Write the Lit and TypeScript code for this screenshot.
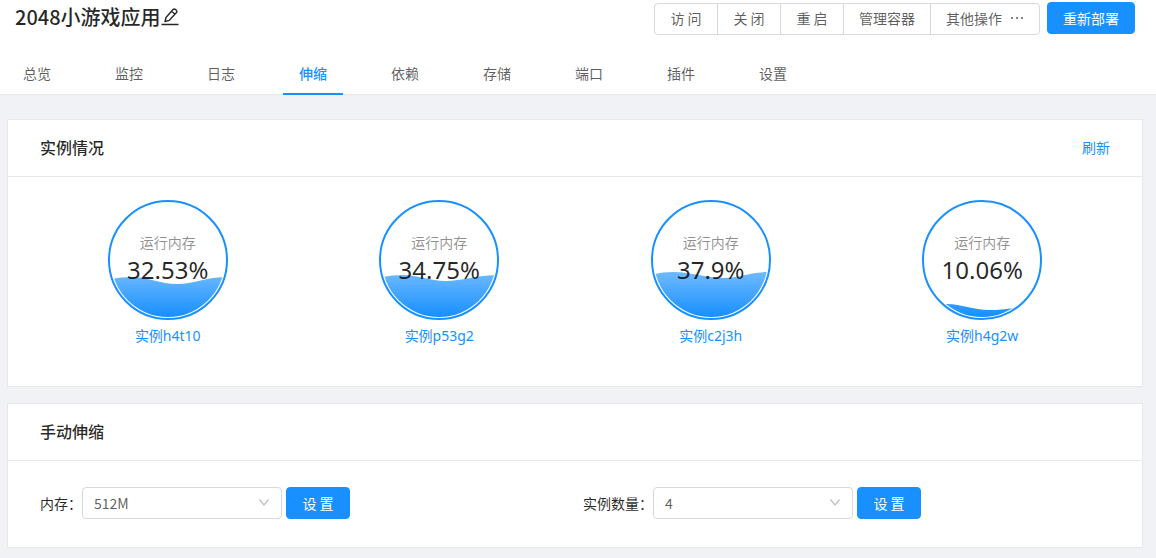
import { LitElement, html, css } from "lit";
import { customElement, property } from "lit/decorators.js";

@customElement("liquid-gauge")
class LiquidGauge extends LitElement {
  @property() caption = "";
  @property() value = "";
  @property() wave = "";

  static styles = css`
    :host {
      display: grid;
      width: 120px;
      height: 120px;
    }
    .dial,
    .text {
      grid-area: 1 / 1;
    }
    .dial {
      display: block;
      width: 120px;
      height: 120px;
    }
    .text {
      z-index: 1;
      display: flex;
      flex-direction: column;
      align-items: center;
      padding-top: 31px;
    }
    .caption {
      font-size: 14px;
      line-height: 22px;
      color: rgba(0, 0, 0, 0.45);
    }
    .value {
      font-family: "Noto Sans", sans-serif;
      font-size: 24px;
      line-height: 34px;
      color: rgba(0, 0, 0, 0.85);
    }
  `;

  render() {
    return html`
      <svg class="dial" viewBox="0 0 120 120" aria-hidden="true">
        <defs>
          <linearGradient id="water" gradientUnits="userSpaceOnUse" x1="0" y1="0" x2="0" y2="116">
            <stop offset="0" stop-color="#ffffff" />
            <stop offset="1" stop-color="#1890ff" />
          </linearGradient>
          <clipPath id="inner"><circle cx="60" cy="60" r="57" /></clipPath>
        </defs>
        <path d=${this.wave} fill="url(#water)" clip-path="url(#inner)" />
        <circle cx="60" cy="60" r="59" fill="none" stroke="#1890ff" stroke-width="2" />
      </svg>
      <div class="text">
        <span class="caption">${this.caption}</span>
        <span class="value">${this.value}</span>
      </div>
    `;
  }
}

const TABS = ["总览", "监控", "日志", "伸缩", "依赖", "存储", "端口", "插件", "设置"];
const ACTIVE_TAB = "伸缩";

const INSTANCES = [
  { name: "实例h4t10", value: "32.53%", wave: "M0 80C8 78 16 77 24 77C40 77 52 84 69 84C86 84 98 77 120 77V120H0Z" },
  { name: "实例p53g2", value: "34.75%", wave: "M0 78C8 76 16 75 24 75C40 75 50 81 67 81C84 81 96 75 120 75V120H0Z" },
  { name: "实例c2j3h", value: "37.9%", wave: "M0 75C8 73 14 72 22 72C42 72 54 78 72 78C90 78 98 72 120 72V120H0Z" },
  { name: "实例h4g2w", value: "10.06%", wave: "M0 104H25C40 104 50 110 68 110C80 110 84 109 120 104V120H0Z" },
];

@customElement("app-root")
class AppRoot extends LitElement {
  static styles = css`
    :host {
      display: block;
      box-sizing: border-box;
      min-height: 100vh;
      padding-bottom: 10px;
      background: #f0f2f5;
      color: rgba(0, 0, 0, 0.85);
      font-family: "Noto Sans CJK SC", sans-serif;
      font-size: 14px;
      line-height: 22px;
    }
    * {
      box-sizing: border-box;
    }
    a {
      color: #1890ff;
      text-decoration: none;
    }
    .header {
      background: #fff;
      border-bottom: 1px solid #e8e8e8;
    }
    .bar {
      display: flex;
      justify-content: space-between;
      align-items: flex-start;
      padding: 2px 21px 0 15px;
    }
    .title {
      display: flex;
      align-items: center;
      margin: 0;
      font-size: 20px;
      line-height: 30px;
      font-weight: 500;
    }
    .edit {
      display: flex;
      padding: 0;
      border: 0;
      background: none;
      color: inherit;
    }
    .actions {
      display: flex;
      align-items: flex-start;
      gap: 7px;
    }
    .group {
      display: flex;
      padding-top: 1px;
    }
    .btn {
      min-width: 64px;
      height: 32px;
      padding: 0 15px;
      border: 1px solid #d9d9d9;
      background: #fff;
      color: rgba(0, 0, 0, 0.65);
      font: inherit;
      line-height: 30px;
      white-space: nowrap;
    }
    .group .btn {
      display: flex;
      align-items: center;
      justify-content: center;
      gap: 8px;
      padding-bottom: 2px;
    }
    .group .btn + .btn {
      margin-left: -1px;
    }
    .group .btn:first-child {
      border-radius: 4px 0 0 4px;
    }
    .group .btn:last-child {
      border-radius: 0 4px 4px 0;
    }
    .primary {
      border-color: #1890ff;
      border-radius: 4px;
      background: #1890ff;
      color: #fff;
    }
    .tabs {
      display: flex;
      gap: 32px;
      padding: 18px 7px 0;
      margin-bottom: -1px;
    }
    .tab {
      padding: 9px 16px;
      border-bottom: 2px solid transparent;
      color: rgba(0, 0, 0, 0.65);
    }
    .tab.active {
      border-color: #1890ff;
      color: #1890ff;
      font-weight: 500;
    }
    .main {
      display: flex;
      flex-direction: column;
      gap: 16px;
      padding: 24px 13px 0 7px;
    }
    .card {
      border: 1px solid #e8e8e8;
      background: #fff;
    }
    .head {
      display: flex;
      justify-content: space-between;
      align-items: center;
      height: 57px;
      padding: 0 32px 2px;
      border-bottom: 1px solid #e8e8e8;
    }
    .heading {
      margin: 0;
      font-size: 16px;
      line-height: 24px;
      font-weight: 500;
    }
    .instances {
      display: grid;
      grid-template-columns: repeat(4, 1fr);
      padding: 23px 24px 39px;
    }
    .instance {
      display: flex;
      flex-direction: column;
      align-items: center;
      gap: 5px;
    }
    .name {
      font-family: "Noto Sans", "Noto Sans CJK SC", sans-serif;
    }
    .form {
      display: grid;
      grid-template-columns: repeat(2, 1fr);
      padding: 26px 24px 28px;
    }
    .field {
      display: flex;
      align-items: center;
      padding: 0 8px;
    }
    .select {
      display: grid;
      align-items: center;
      width: 200px;
      margin-right: 4px;
    }
    .select select {
      grid-area: 1 / 1;
      height: 32px;
      padding: 0 11px;
      border: 1px solid #d9d9d9;
      border-radius: 4px;
      background: #fff;
      color: rgba(0, 0, 0, 0.65);
      font: inherit;
      appearance: none;
    }
    .arrow {
      grid-area: 1 / 1;
      justify-self: end;
      margin-right: 12px;
      pointer-events: none;
    }
  `;

  private field(id: string, label: string, value: string) {
    return html`
      <div class="field">
        <label for=${id}>${label}：</label>
        <div class="select">
          <select id=${id}><option>${value}</option></select>
          <svg class="arrow" width="12" height="12" viewBox="0 0 12 12" fill="none" stroke="#bfbfbf" stroke-width="1.2" aria-hidden="true">
            <path d="M1.5 2.5L6 8L10.5 2.5" />
          </svg>
        </div>
        <button class="btn primary">设 置</button>
      </div>
    `;
  }

  render() {
    return html`
      <header class="header">
        <div class="bar">
          <h1 class="title">
            2048小游戏应用
            <button class="edit" aria-label="编辑">
              <svg width="18" height="18" viewBox="0 0 18 18" fill="none" stroke="currentColor" stroke-width="1.4" stroke-linejoin="round" aria-hidden="true">
                <path d="M4 13.5L5 9.5L12 1.5Q13.2 0.4 14.8 1.7Q16.6 3.2 15.5 4.6L8.3 12.3ZM10.6 3.2L13.9 6.2M0.5 16.5H17.5" />
              </svg>
            </button>
          </h1>
          <div class="actions">
            <div class="group">
              <button class="btn">访 问</button>
              <button class="btn">关 闭</button>
              <button class="btn">重 启</button>
              <button class="btn">管理容器</button>
              <button class="btn">
                其他操作
                <svg width="14" height="14" viewBox="0 0 14 14" fill="currentColor" aria-hidden="true">
                  <circle cx="2" cy="7" r="1" /><circle cx="7" cy="7" r="1" /><circle cx="12" cy="7" r="1" />
                </svg>
              </button>
            </div>
            <button class="btn primary">重新部署</button>
          </div>
        </div>
        <nav class="tabs">
          ${TABS.map((t) => html`<a href="#" class="tab ${t === ACTIVE_TAB ? "active" : ""}">${t}</a>`)}
        </nav>
      </header>
      <main class="main">
        <section class="card">
          <div class="head">
            <h2 class="heading">实例情况</h2>
            <a href="#">刷新</a>
          </div>
          <div class="instances">
            ${INSTANCES.map(
              (i) => html`
                <div class="instance">
                  <liquid-gauge caption="运行内存" value=${i.value} wave=${i.wave}></liquid-gauge>
                  <a class="name" href="#">${i.name}</a>
                </div>
              `
            )}
          </div>
        </section>
        <section class="card">
          <div class="head"><h2 class="heading">手动伸缩</h2></div>
          <div class="form">
            ${this.field("memory", "内存", "512M")} ${this.field("count", "实例数量", "4")}
          </div>
        </section>
      </main>
    `;
  }
}
